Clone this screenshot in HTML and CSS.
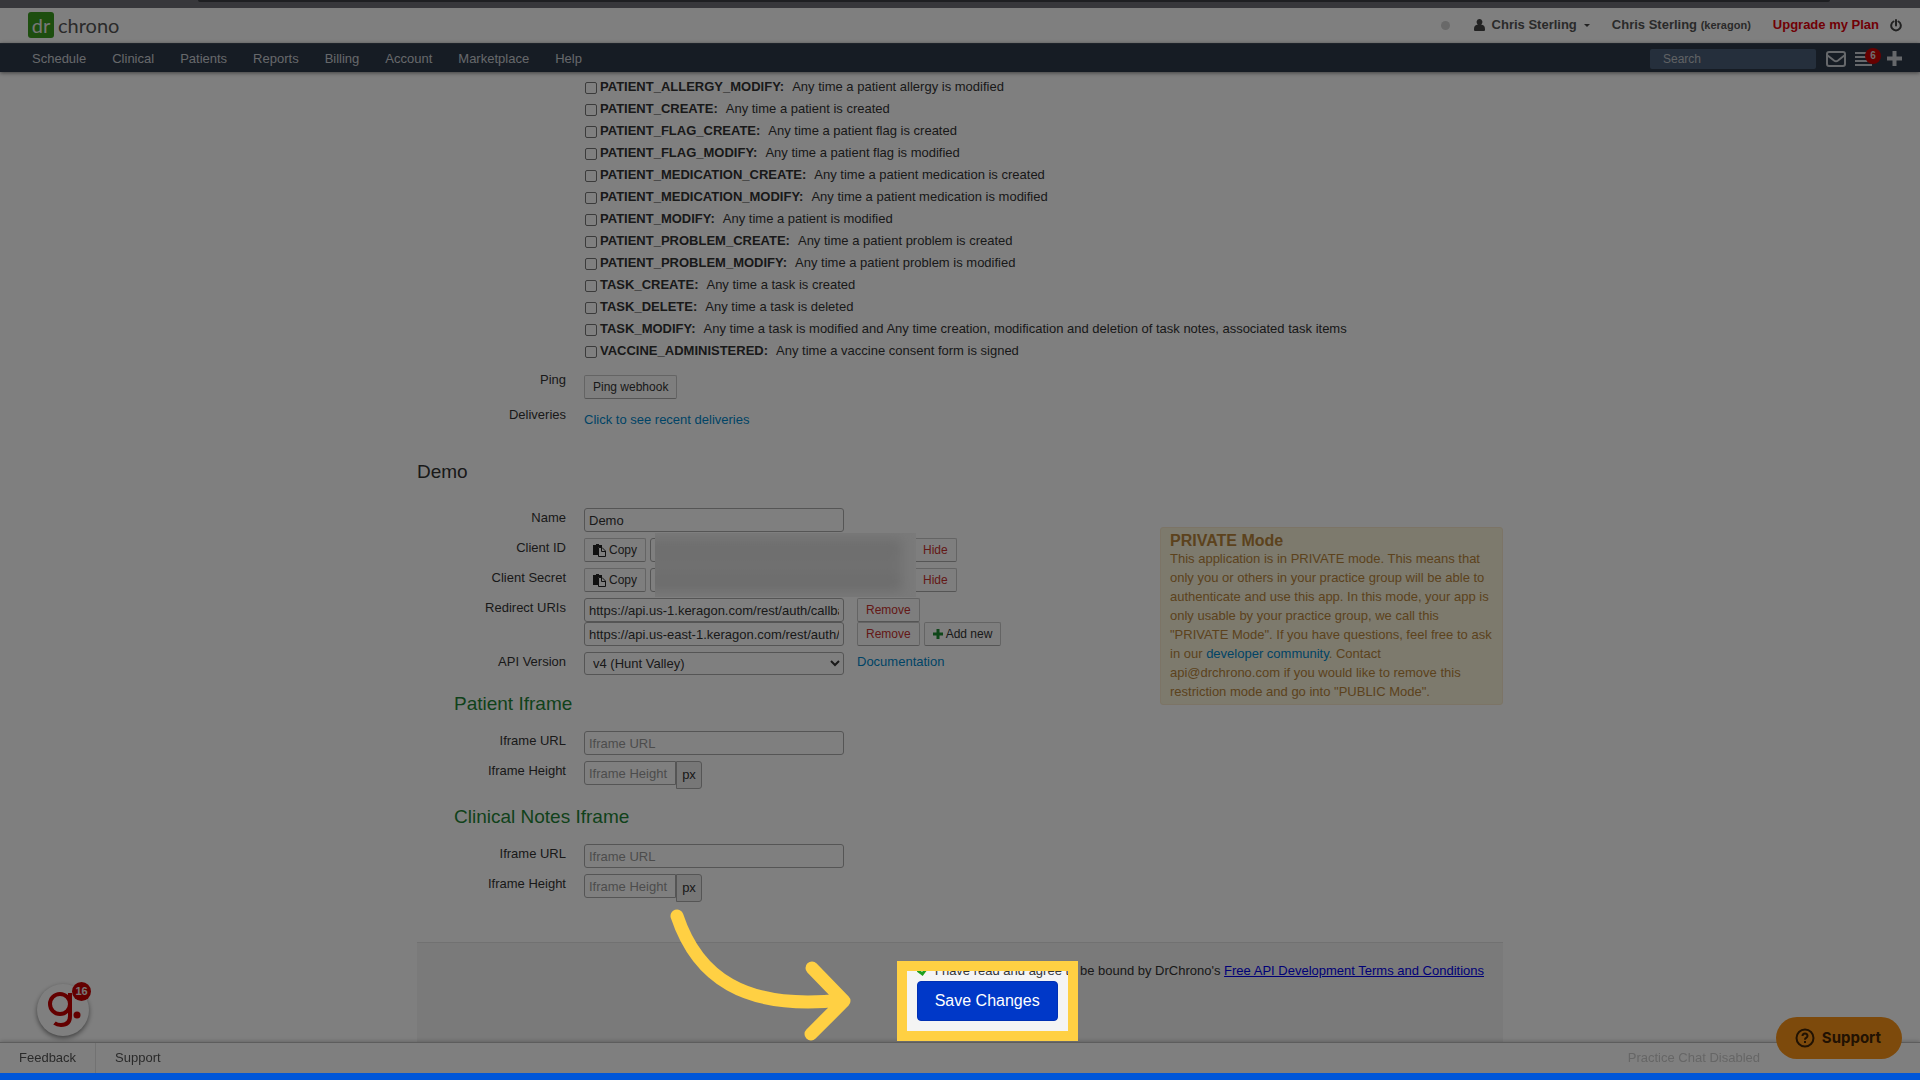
FILE: index.html
```html
<!DOCTYPE html>
<html lang="en">
<head>
<meta charset="utf-8">
<title>drchrono - API Management</title>
<link rel="stylesheet" href="styles.css">
</head>
<body>
<div class="browser-edge"><div class="address-edge"></div></div>
<header class="topbar">
  <a class="logo" href="#"><span class="logo-box">dr</span><span>chrono</span></a>
  <div class="account">
    <span class="status-dot"></span>
    <a class="user" href="#">
      <svg class="user-icon" viewBox="0 0 11 12"><path d="M5.500 0a2.800 3 0 0 1 1.600 5.500C9.500 6 11 7 11 10v1q0 1-1 1H1q-1 0-1-1v-1C0 7 1.500 6 3.900 5.500A2.800 3 0 0 1 5.500 0z"/></svg>
      Chris Sterling <span class="caret"></span></a>
    <a class="practice" href="#">Chris Sterling <small>(keragon)</small></a>
    <a class="upgrade" href="#">Upgrade my Plan</a>
    <a class="power" href="#" aria-label="Log out"><svg width="12" height="13" viewBox="0 0 12 13"><path d="M3.500 2.500a4.800 4.800 0 1 0 5 0M6 1v5.500" fill="none" stroke="#444" stroke-width="2" stroke-linecap="round"/></svg></a>
  </div>
</header>
<nav class="nav">
  <a href="#">Schedule</a><a href="#">Clinical</a><a href="#">Patients</a><a href="#">Reports</a><a href="#">Billing</a><a href="#">Account</a><a href="#">Marketplace</a><a href="#">Help</a>
  <div class="nav-tools">
    <input class="search" type="text" placeholder="Search" aria-label="Search">
    <svg width="20" height="16" viewBox="0 0 20 16" fill="none" stroke="#ccd0d6" stroke-width="2"><rect x="1" y="1" width="18" height="14" rx="2"/><path d="M1 4l7 5.500q2 1.500 4 0L19 4"/></svg>
    <span class="tasks"><svg width="17" height="14" viewBox="0 0 17 14" fill="#ccd0d6"><path d="M0 0h17v2H0zM0 4h17v2H0zM0 8h17v2H0zM0 12h17v2H0z"/></svg><span class="count">6</span></span>
    <svg width="15" height="15" viewBox="0 0 15 15"><path d="M5.500 0h4v5.500H15v4H9.500V15h-4V9.500H0v-4h5.500z" fill="#ccd0d6"/></svg>
  </div>
</nav>

<main class="page">
  <div class="events">
    <label class="event"><input type="checkbox"><b>PATIENT_ALLERGY_MODIFY:</b>Any time a patient allergy is modified</label>
    <label class="event"><input type="checkbox"><b>PATIENT_CREATE:</b>Any time a patient is created</label>
    <label class="event"><input type="checkbox"><b>PATIENT_FLAG_CREATE:</b>Any time a patient flag is created</label>
    <label class="event"><input type="checkbox"><b>PATIENT_FLAG_MODIFY:</b>Any time a patient flag is modified</label>
    <label class="event"><input type="checkbox"><b>PATIENT_MEDICATION_CREATE:</b>Any time a patient medication is created</label>
    <label class="event"><input type="checkbox"><b>PATIENT_MEDICATION_MODIFY:</b>Any time a patient medication is modified</label>
    <label class="event"><input type="checkbox"><b>PATIENT_MODIFY:</b>Any time a patient is modified</label>
    <label class="event"><input type="checkbox"><b>PATIENT_PROBLEM_CREATE:</b>Any time a patient problem is created</label>
    <label class="event"><input type="checkbox"><b>PATIENT_PROBLEM_MODIFY:</b>Any time a patient problem is modified</label>
    <label class="event"><input type="checkbox"><b>TASK_CREATE:</b>Any time a task is created</label>
    <label class="event"><input type="checkbox"><b>TASK_DELETE:</b>Any time a task is deleted</label>
    <label class="event"><input type="checkbox"><b>TASK_MODIFY:</b>Any time a task is modified and Any time creation, modification and deletion of task notes, associated task items</label>
    <label class="event"><input type="checkbox"><b>VACCINE_ADMINISTERED:</b>Any time a vaccine consent form is signed</label>
  </div>
  <div class="webhook">
    <div class="row"><span class="label">Ping</span><div class="controls"><button class="btn" type="button">Ping webhook</button></div></div>
    <div class="row"><span class="label">Deliveries</span><div class="controls"><a class="link" href="#">Click to see recent deliveries</a></div></div>
  </div>

  <h2 class="app-title">Demo</h2>
  <div class="app">
    <div class="fields">
      <div class="row"><label class="label" for="name">Name</label><div class="controls"><input class="text" id="name" type="text" value="Demo"></div></div>
      <div class="secrets">
        <div class="row"><label class="label" for="cid">Client ID</label><div class="controls"><button class="btn" type="button"><svg class="paste" viewBox="0 0 13 13"><path d="M0 1h3V0h3v1h3v2H5v8H0z"/><path d="M5.500 3.500h3.500l3.500 3.500v5.500h-7zM8.500 3.500v4h4" fill="#fff" stroke="#222"/></svg>Copy</button><input class="text" id="cid" type="text"><button class="btn danger" type="button">Hide</button></div></div>
        <div class="row"><label class="label" for="secret">Client Secret</label><div class="controls"><button class="btn" type="button"><svg class="paste" viewBox="0 0 13 13"><path d="M0 1h3V0h3v1h3v2H5v8H0z"/><path d="M5.500 3.500h3.500l3.500 3.500v5.500h-7zM8.500 3.500v4h4" fill="#fff" stroke="#222"/></svg>Copy</button><input class="text" id="secret" type="text"><button class="btn danger" type="button">Hide</button></div></div>
        <div class="redaction"><div class="smear"></div></div>
      </div>
      <div class="row"><label class="label" for="uri1">Redirect URIs</label>
        <div>
          <div class="controls"><input class="text" id="uri1" type="text" value="https://api.us-1.keragon.com/rest/auth/callback"><button class="btn danger apart" type="button">Remove</button></div>
          <div class="controls"><input class="text" type="text" aria-label="Second redirect URI" value="https://api.us-east-1.keragon.com/rest/auth/callback"><button class="btn danger apart" type="button">Remove</button><button class="btn" type="button"><svg class="plus" viewBox="0 0 10 10"><path d="M3.500 0h3v3.500H10v3H6.500V10h-3V6.500H0v-3h3.500z"/></svg>Add new</button></div>
        </div>
      </div>
      <div class="row"><label class="label" for="ver">API Version</label><div class="controls"><span class="select-wrap"><select class="select" id="ver"><option>v4 (Hunt Valley)</option></select><svg class="chevron" viewBox="0 0 10 7"><path d="M1 1l4 4 4-4" fill="none" stroke="#333" stroke-width="2"/></svg></span><a class="link apart" href="#">Documentation</a></div></div>

      <h3 class="section-title">Patient Iframe</h3>
      <div class="row"><label class="label" for="pu">Iframe URL</label><div class="controls"><input class="text" id="pu" type="text" placeholder="Iframe URL"></div></div>
      <div class="row"><label class="label" for="ph">Iframe Height</label><div class="controls joined"><input class="text short" id="ph" type="text" placeholder="Iframe Height"><span class="addon">px</span></div></div>

      <h3 class="section-title">Clinical Notes Iframe</h3>
      <div class="row"><label class="label" for="cu">Iframe URL</label><div class="controls"><input class="text" id="cu" type="text" placeholder="Iframe URL"></div></div>
      <div class="row"><label class="label" for="ch">Iframe Height</label><div class="controls joined"><input class="text short" id="ch" type="text" placeholder="Iframe Height"><span class="addon">px</span></div></div>
    </div>
    <aside class="notice">
      <h4>PRIVATE Mode</h4>
      <p>This application is in PRIVATE mode. This means that only you or others in your practice group will be able to authenticate and use this app. In this mode, your app is only usable by your practice group, we call this "PRIVATE Mode". If you have questions, feel free to ask in our <a class="link" href="#">developer community</a>. Contact<br>api@drchrono.com if you would like to remove this restriction mode and go into "PUBLIC Mode".</p>
    </aside>
  </div>

  <section class="submit">
    <div class="agreement">
      <div class="agree"><input class="tick" type="checkbox" id="agree" checked><label for="agree">I have read and agree to be bound by DrChrono's</label>&nbsp;<a class="terms" href="#">Free API Development Terms and Conditions</a></div>
      <div class="save-wrap"><button class="save" type="submit">Save Changes</button><div class="spotlight"></div></div>
    </div>
    <svg class="arrow" viewBox="660 905 200 140"><path d="M677 917C697 977 743 1012 842 1001M812 969L844 1002L811 1035"/></svg>
  </section>
</main>

<div class="chat-logo">
  <svg width="52" height="52" viewBox="0 0 52 52" fill="none" stroke="#c80000" stroke-width="4"><circle cx="23" cy="20" r="10"/><path d="M33 9v23q0 9-9 9-4 0-6.500-2"/><circle cx="40" cy="31" r="3.500" fill="#c80000" stroke="none"/></svg>
  <span class="chat-count">16</span>
</div>
<footer class="bottombar">
  <a href="#">Feedback</a><a href="#">Support</a><span class="chat-status">Practice Chat Disabled</span>
</footer>
<button class="support" type="button"><svg width="20" height="20" viewBox="0 0 20 20" fill="none" stroke="#432506" stroke-width="2"><circle cx="10" cy="10" r="8.500"/><path d="M7.500 8q0-2.500 2.500-2.500T12.500 8q0 1.200-1.500 2-1 .5-1 1.700M10 13v2"/></svg>Support</button>
<div class="blue-edge"></div>
</body>
</html>
```
FILE: styles.css
```css
* { box-sizing: border-box; }
body {
  margin: 0;
  height: 100vh;
  overflow: hidden;
  background: #fff;
  color: #333;
  font: 13px/20px "Liberation Sans", Arial, sans-serif;
}
a { color: inherit; text-decoration: none; }
h2, h3, h4, p { margin: 0; font-weight: normal; }
button, input, select { font: inherit; color: inherit; margin: 0; }
svg { flex: none; }

.browser-edge { height: 8px; padding: 0 90px 0 198px; background: #6e6e76; }
.address-edge { height: 2px; background: #3c3e44; border-radius: 0 0 8px 8px; }

.topbar {
  display: flex;
  align-items: center;
  justify-content: space-between;
  height: 35px;
  padding: 0 18px 1px 28px;
}
.logo { display: flex; align-items: center; gap: 4px; font: 20px/26px Lato, sans-serif; color: #555; }
.logo-box { width: 26px; height: 26px; border-radius: 3px; background: #3a9c1e; color: #eee; text-align: center; }
.account { display: flex; align-items: center; font-weight: bold; color: #555; }
.status-dot { width: 9px; height: 9px; margin-right: 24px; border-radius: 50%; background: #d2d2d2; }
.user { display: flex; align-items: center; margin-right: 22px; }
.user-icon { width: 11px; height: 12px; margin-right: 7px; fill: #444; }
.caret { margin-left: 7px; border: 3px solid transparent; border-top-color: #444; border-bottom: 0; }
.practice { margin-right: 22px; }
.practice small { font-size: 11px; }
.upgrade { margin-right: 11px; color: #e2000a; }
.power { display: flex; }

.nav {
  position: relative;
  display: flex;
  align-items: center;
  height: 29px;
  padding: 1px 18px 0 32px;
  gap: 26px;
  border-top: 1px solid #3c4654;
  background: #2d3848;
  box-shadow: 0 1px 4px rgba(0, 0, 0, 0.5);
  color: #ccd0d6;
}
.nav-tools { display: flex; align-items: center; gap: 9px; margin-left: auto; }
.search {
  width: 166px;
  height: 20px;
  margin-right: 1px;
  padding: 0 13px;
  border: 0;
  border-radius: 2px;
  background: #4a5f78;
  font-size: 12px;
}
.search::placeholder { color: #c0c4ca; opacity: 1; }
.tasks { position: relative; display: flex; margin-right: 6px; }
.count {
  position: absolute;
  left: 10px;
  top: -4px;
  width: 16px;
  height: 16px;
  border-radius: 50%;
  background: #cc0000;
  color: #ddd;
  font: bold 10px/16px "Liberation Sans", Arial, sans-serif;
  text-align: center;
}

.page { max-width: 1086px; margin: 0 auto; padding-top: 4px; }
.events { padding-left: 167px; }
.event { display: flex; align-items: center; height: 22px; white-space: nowrap; }
.event input {
  appearance: none;
  width: 12px;
  height: 12px;
  margin: 1px 3px 0 1px;
  border: 1px solid #767676;
  border-radius: 2px;
}
.event b { margin-right: 8px; }

.row { display: grid; grid-template-columns: 149px auto; column-gap: 18px; justify-content: start; min-height: 24px; }
.label { text-align: right; white-space: nowrap; }
.controls { display: flex; gap: 4px; min-height: 24px; }
.webhook { margin: 8px 0 24px; }
.webhook .controls { padding: 5px 0 6px; }

.btn {
  display: flex;
  align-items: center;
  height: 24px;
  padding: 0 8px;
  border: 1px solid #c8c8c8;
  border-bottom-color: #aaa;
  border-radius: 2px;
  background: #fcfcfc;
  font-size: 12px;
  white-space: nowrap;
}
.btn.danger { color: #c8322e; }
.apart { margin-left: 9px; }
.paste { width: 13px; height: 13px; margin-right: 3px; fill: #222; }
.plus { width: 10px; height: 10px; margin-right: 3px; fill: #1e8c32; }
.text, .select {
  width: 260px;
  height: 24px;
  padding: 0 4px;
  border: 1px solid #aaa;
  border-radius: 3px;
  background: #fff;
}
.text::placeholder { color: #999; opacity: 1; }
.text.short { width: 92px; border-radius: 3px 0 0 3px; }
.joined { gap: 0; }
.addon { height: 28px; width: 26px; border: 1px solid #aaa; border-radius: 0 3px 3px 0; background: #eee; line-height: 26px; text-align: center; }
.select-wrap { position: relative; display: flex; }
.select { appearance: none; height: 23px; padding: 0 8px; }
.chevron { position: absolute; right: 4px; top: 8px; width: 10px; height: 7px; pointer-events: none; }
.link { color: #0088cc; }

.app-title { margin-bottom: 24px; font-size: 19px; line-height: 24px; }
.app { display: flex; justify-content: space-between; align-items: flex-start; }
.fields { display: grid; row-gap: 6px; }
.secrets { position: relative; display: grid; row-gap: 6px; }
.redaction { position: absolute; left: 238px; top: -5px; width: 261px; height: 64px; overflow: hidden; background: #f4f4f4; }
.smear { height: 52px; margin: 6px 14px 6px -10px; background: linear-gradient(#dadada, #dedede 30%, #e2e2e2 55%, #d8d8d8 85%); filter: blur(6px); }
.section-title { padding: 12px 0 11px 37px; color: #1f8436; font-size: 19px; line-height: 20px; }
.notice {
  width: 343px;
  margin-top: 19px;
  padding: 5px 4px 3px 9px;
  border: 1px solid #f8e8cc;
  border-radius: 3px;
  background: #faf4da;
  color: #b8853a;
  line-height: 19px;
}
.notice h4 { font-size: 16px; line-height: 16px; font-weight: bold; }

.submit {
  position: relative;
  display: flex;
  justify-content: flex-end;
  margin-top: 40px;
  padding: 18px 19px 58px;
  border-top: 1px solid #e2e2e2;
  background: #f4f4f4;
}
.agree { display: flex; align-items: center; }
.tick {
  appearance: none;
  width: 12px;
  height: 10px;
  margin-right: 6px;
  background: #1ea01e;
  clip-path: polygon(0 55%, 20% 35%, 45% 60%, 82% 0, 100% 20%, 50% 100%);
}
.terms { color: #0000ee; text-decoration: underline; }
.save-wrap { position: relative; width: 141px; }
.save {
  display: block;
  width: 100%;
  height: 40px;
  border: 1px solid #0030b4;
  border-radius: 4px;
  background: #0038c8;
  color: #fff;
  font-size: 16px;
}
.spotlight {
  position: absolute;
  z-index: 50;
  inset: -20px;
  border: 10px solid #ffd043;
  box-shadow: 0 0 0 2000px rgba(0, 0, 0, 0.5);
  pointer-events: none;
}
.arrow {
  position: absolute;
  z-index: 51;
  left: 243px;
  top: -39px;
  width: 200px;
  height: 140px;
  fill: none;
  stroke: #ffd043;
  stroke-width: 13px;
  stroke-linecap: round;
  stroke-linejoin: round;
}

.bottombar {
  position: fixed;
  left: 0;
  right: 0;
  bottom: 7px;
  display: flex;
  align-items: center;
  height: 31px;
  padding-right: 160px;
  border-top: 1px solid #bbb;
  background: #fff;
  box-shadow: 0 -1px 4px rgba(0, 0, 0, 0.2);
  color: #555;
}
.bottombar a { padding: 5px 19px; }
.bottombar a:first-child { border-right: 1px solid #e4e4e4; }
.chat-status { margin-left: auto; color: #ccc; }
.chat-logo {
  position: fixed;
  left: 37px;
  bottom: 44px;
  width: 52px;
  height: 52px;
  border-radius: 50%;
  background: #fff;
  box-shadow: 0 2px 5px rgba(0, 0, 0, 0.5);
}
.chat-count {
  position: absolute;
  right: -2px;
  top: -2px;
  width: 19px;
  height: 19px;
  border-radius: 50%;
  background: #c80000;
  color: #eee;
  font: bold 11px/19px "Liberation Sans", Arial, sans-serif;
  text-align: center;
}
.support {
  position: fixed;
  right: 18px;
  bottom: 21px;
  display: flex;
  align-items: center;
  gap: 7px;
  height: 42px;
  padding: 0 21px 0 19px;
  border: 0;
  border-radius: 21px;
  background: #fb9418;
  color: #432506;
  font: bold 15px/20px Inter, sans-serif;
}
.blue-edge { position: fixed; z-index: 60; left: 0; right: 0; bottom: 0; height: 7px; background: #0056d8; }
```
